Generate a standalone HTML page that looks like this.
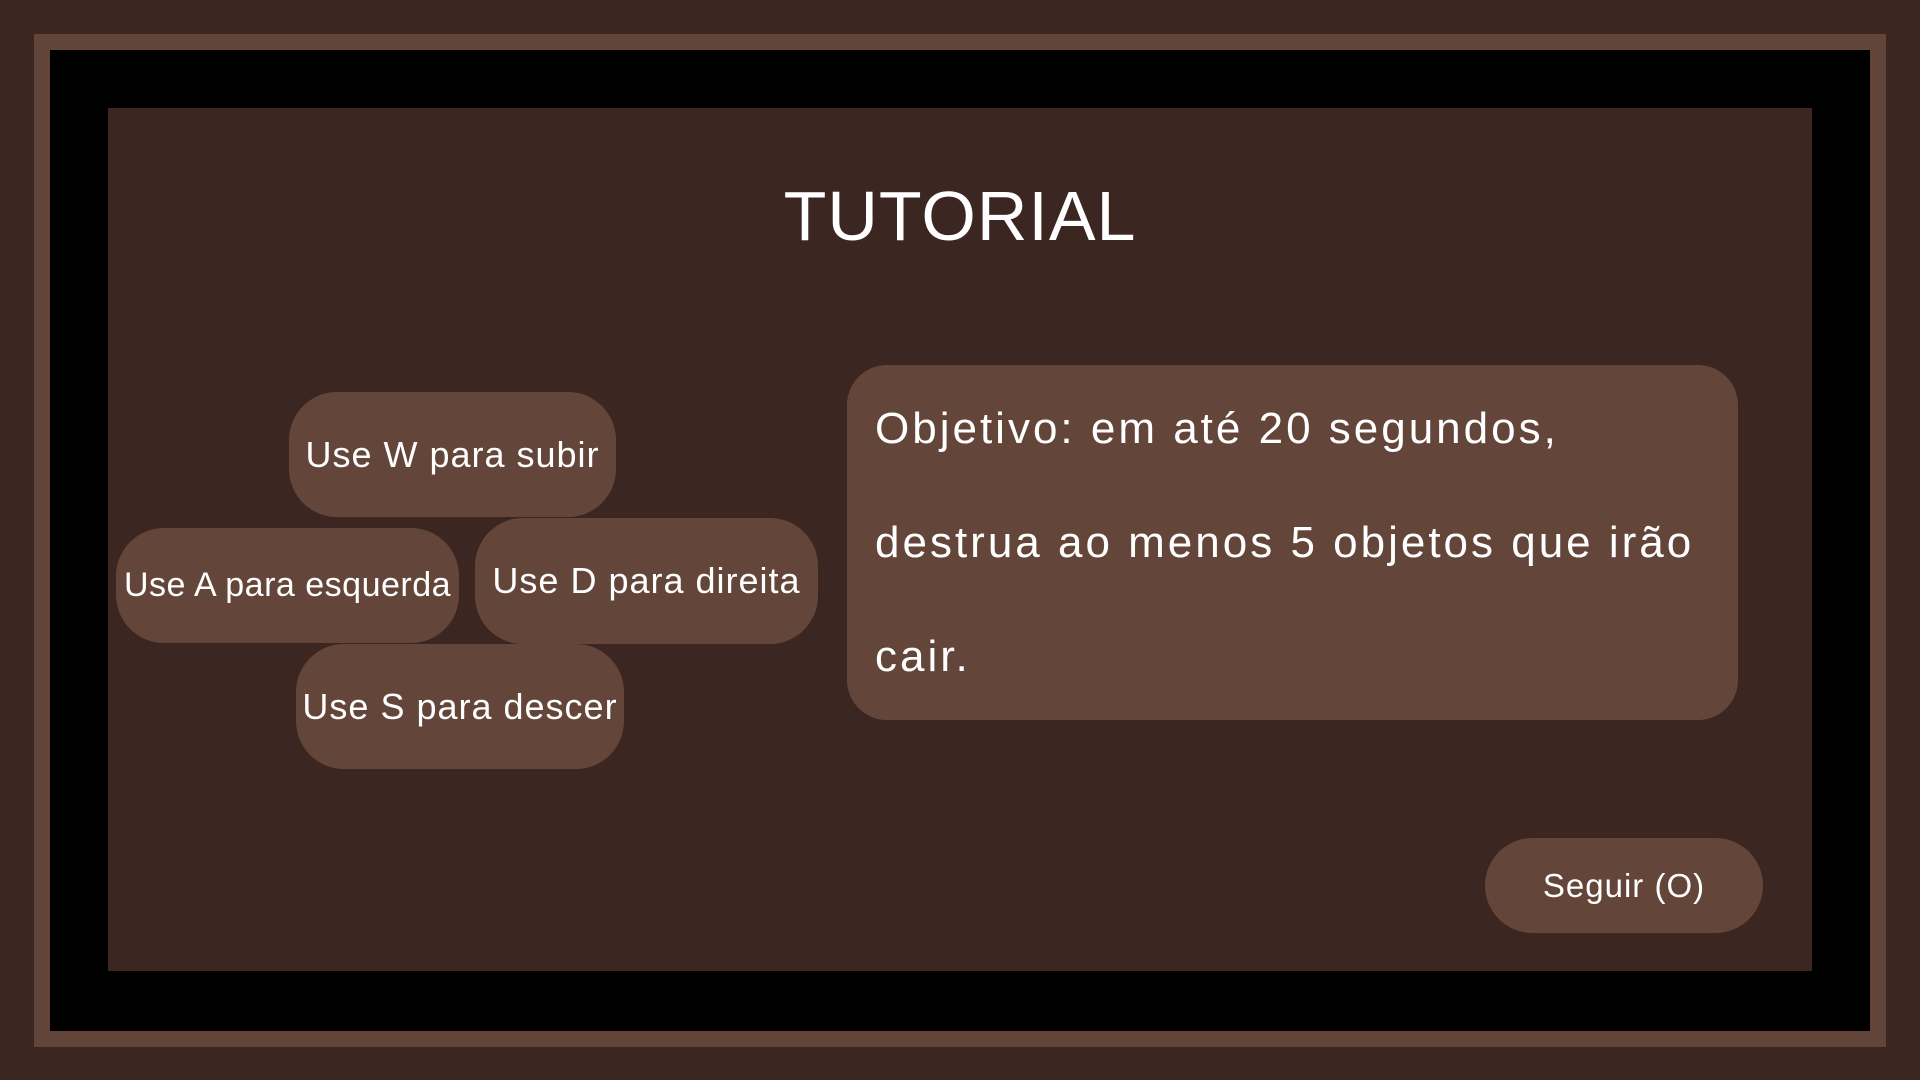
<!DOCTYPE html>
<html><head><meta charset="utf-8"><style>
*{margin:0;padding:0;box-sizing:border-box}
html,body{width:1920px;height:1080px;overflow:hidden;background:#3c2622;font-family:"Liberation Sans",sans-serif;color:#fff}
.abs{position:absolute}
.frame{left:34px;top:34px;width:1852px;height:1013px;border:16px solid #634439;background:#000}
.inner{left:108px;top:108px;width:1704px;height:863px;background:#3c2622}
.title{left:0;width:1920px;top:176px;text-align:center;font-size:70px;letter-spacing:1px}
.btn{background:#634639;border-radius:48px;display:flex;align-items:center;justify-content:center;font-size:36px;white-space:nowrap;letter-spacing:1px}
.obj{left:847px;top:365px;width:891px;height:355px;background:#634639;border-radius:40px;padding:7px 28px;font-size:44px;line-height:114px;letter-spacing:3px}
</style></head><body>
<div class="abs frame"></div>
<div class="abs inner"></div>
<div class="abs title">TUTORIAL</div>
<div class="abs btn" style="left:289px;top:392px;width:327px;height:125px">Use W para subir</div>
<div class="abs btn" style="left:116px;top:528px;width:343px;height:115px;font-size:34px;letter-spacing:0.5px">Use A para esquerda</div>
<div class="abs btn" style="left:475px;top:518px;width:343px;height:126px">Use D para direita</div>
<div class="abs btn" style="left:296px;top:644px;width:328px;height:125px">Use S para descer</div>
<div class="abs obj">Objetivo: em até 20 segundos,<br>destrua ao menos 5 objetos que irão<br>cair.</div>
<div class="abs btn" style="left:1485px;top:838px;width:278px;height:95px;font-size:33px">Seguir (O)</div>
</body></html>
